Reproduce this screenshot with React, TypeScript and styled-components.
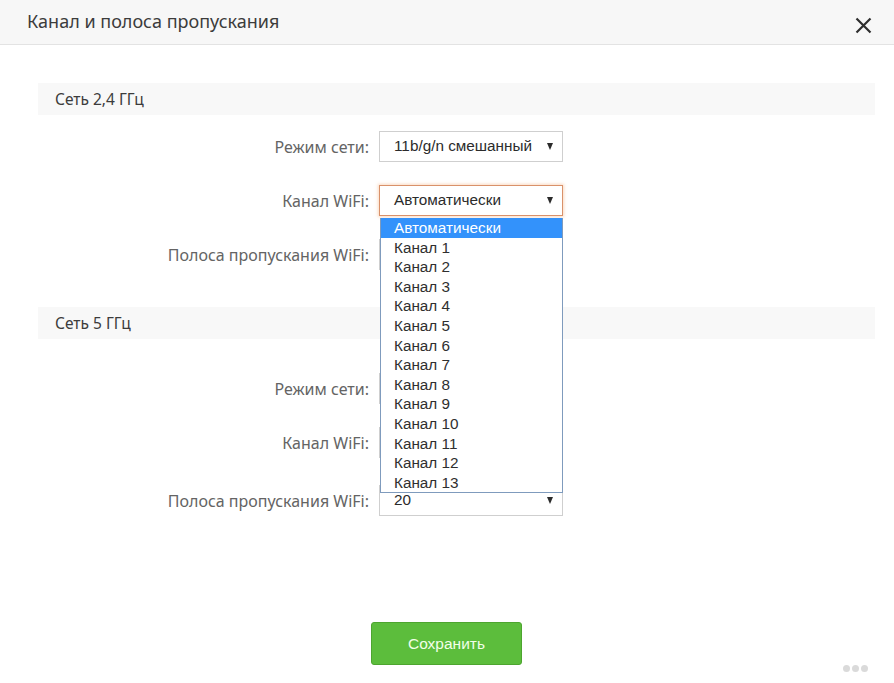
import React, { useState } from "react";
import styled, { createGlobalStyle, css } from "styled-components";

const GlobalStyle = createGlobalStyle`
  html, body {
    margin: 0;
    padding: 0;
    background: #fff;
  }
  body {
    font-family: "Noto Sans", "Open Sans", sans-serif;
  }
`;

const Dialog = styled.div`
  width: 894px;
  height: 683px;
  display: flex;
  flex-direction: column;
  background: #fff;
  position: relative;
  overflow: hidden;
`;

const Header = styled.div`
  height: 45px;
  box-sizing: border-box;
  display: flex;
  align-items: center;
  justify-content: space-between;
  padding: 0 21px 3px 27px;
  background: #f7f7f7;
  border-bottom: 1px solid #e3e3e3;
`;

const Title = styled.h1`
  margin: 0;
  font-family: "Noto Sans", sans-serif;
  font-size: 18px;
  font-weight: 400;
  color: #3c3c3c;
`;

const CloseButton = styled.button`
  width: 20px;
  height: 20px;
  padding: 0;
  margin-top: 9px;
  border: none;
  background: none;
  display: flex;
  align-items: center;
  justify-content: center;
  cursor: pointer;
`;

const Body = styled.div`
  display: flex;
  flex-direction: column;
  padding: 38px 19px 0 38px;
`;

const SectionBar = styled.div<{ $gap: number }>`
  height: 32px;
  margin-top: ${(p) => p.$gap}px;
  display: flex;
  align-items: center;
  padding-left: 17px;
  background: #f8f8f8;
  font-size: 15.5px;
  color: #3c3c3c;
`;

const Row = styled.div<{ $gap: number }>`
  display: flex;
  align-items: center;
  gap: 10px;
  margin-top: ${(p) => p.$gap}px;
  height: 31px;
`;

const Label = styled.label`
  width: 331px;
  text-align: right;
  font-size: 16px;
  color: #646464;
`;

const SelectWrap = styled.div`
  position: relative;
`;

const SelectBox = styled.div<{ $focused?: boolean }>`
  width: 184px;
  height: 31px;
  box-sizing: border-box;
  display: flex;
  align-items: center;
  justify-content: space-between;
  padding: 0 9px 1px 14px;
  border: 1px solid #cfcfcf;
  background: #fff;
  font-family: "Liberation Sans", Arial, sans-serif;
  font-size: 15.3px;
  color: #2b2b2b;

  ${(p) =>
    p.$focused &&
    css`
      border-color: #d9916a;
      box-shadow: 0 0 3px 1px rgba(245, 170, 120, 0.45);
    `}
`;

const Arrow = styled.span`
  width: 0;
  height: 0;
  border-left: 3.5px solid transparent;
  border-right: 3.5px solid transparent;
  border-top: 7px solid #2b2b2b;
`;

const Dropdown = styled.ul`
  position: absolute;
  top: 33px;
  left: 1px;
  width: 183px;
  box-sizing: border-box;
  margin: 0;
  padding: 0;
  list-style: none;
  background: #fff;
  border: 1px solid #7f9bbd;
  border-top: none;
  z-index: 10;
`;

const Option = styled.li<{ $active?: boolean }>`
  height: 19.6px;
  line-height: 19.6px;
  padding-left: 13px;
  font-family: "Liberation Sans", Arial, sans-serif;
  font-size: 15.3px;
  color: #2f2f2f;

  ${(p) =>
    p.$active &&
    css`
      background: #3392fb;
      color: #fff;
    `}
`;

const Footer = styled.div`
  display: flex;
  justify-content: center;
  margin-top: 106px;
  padding-right: 20px;
`;

const SaveButton = styled.button`
  width: 151px;
  height: 43px;
  border: 1px solid #4da52f;
  border-radius: 3px;
  background: #5cbd3c;
  color: #f2ffe9;
  font-family: "Liberation Sans", Arial, sans-serif;
  font-size: 15.5px;
  cursor: pointer;
`;

const Watermark = styled.div`
  position: absolute;
  right: 26px;
  bottom: 11px;
  display: flex;
  gap: 2px;
`;

const Dot = styled.span`
  width: 7px;
  height: 7px;
  border-radius: 50%;
  background: #dadada;
`;

const channels = ["Автоматически", ...Array.from({ length: 13 }, (_, i) => `Канал ${i + 1}`)];

const Select: React.FC<{ value: string; open?: boolean }> = ({ value, open }) => (
  <SelectWrap>
    <SelectBox $focused={open}>
      <span>{value}</span>
      <Arrow />
    </SelectBox>
    {open && (
      <Dropdown>
        {channels.map((c) => (
          <Option key={c} $active={c === value}>
            {c}
          </Option>
        ))}
      </Dropdown>
    )}
  </SelectWrap>
);

const App: React.FC = () => {
  const [open] = useState(true);

  return (
    <Dialog>
      <GlobalStyle />
      <Header>
        <Title>Канал и полоса пропускания</Title>
        <CloseButton aria-label="Закрыть">
          <svg width="17" height="17" viewBox="0 0 17 17">
            <path d="M1.5 1.5 L15.5 15.5 M15.5 1.5 L1.5 15.5" stroke="#2e2e2e" strokeWidth="2.2" />
          </svg>
        </CloseButton>
      </Header>
      <Body>
        <SectionBar $gap={0}>Сеть 2,4 ГГц</SectionBar>
        <Row $gap={16}>
          <Label>Режим сети:</Label>
          <Select value="11b/g/n смешанный" />
        </Row>
        <Row $gap={23}>
          <Label>Канал WiFi:</Label>
          <Select value="Автоматически" open={open} />
        </Row>
        <Row $gap={23}>
          <Label>Полоса пропускания WiFi:</Label>
          <Select value="20/40" />
        </Row>

        <SectionBar $gap={37}>Сеть 5 ГГц</SectionBar>
        <Row $gap={34}>
          <Label>Режим сети:</Label>
          <Select value="11a/n/ac смешанный" />
        </Row>
        <Row $gap={23}>
          <Label>Канал WiFi:</Label>
          <Select value="Автоматически" />
        </Row>
        <Row $gap={27}>
          <Label>Полоса пропускания WiFi:</Label>
          <Select value="20" />
        </Row>

        <Footer>
          <SaveButton>Сохранить</SaveButton>
        </Footer>
      </Body>
      <Watermark>
        <Dot />
        <Dot />
        <Dot />
      </Watermark>
    </Dialog>
  );
};

export default App;
